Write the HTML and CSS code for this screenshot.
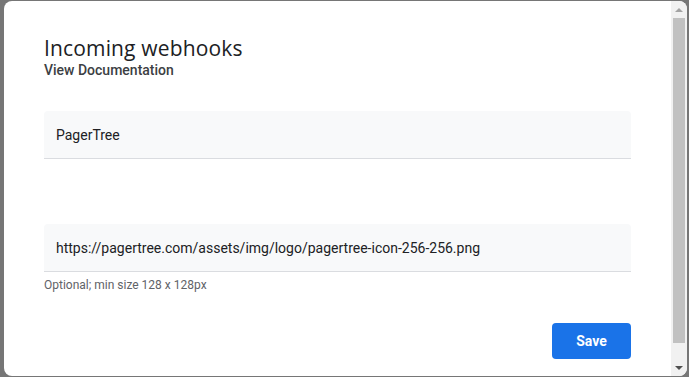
FILE: index.html
```html
<!DOCTYPE html>
<html>
<head>
<meta charset="utf-8">
<link rel="stylesheet" href="styles.css">
</head>
<body>
<div class="dialog">
  <div class="content">
    <h1 class="title">Incoming webhooks</h1>
    <div class="doc">View Documentation</div>
    <div class="field"><span class="value">PagerTree</span></div>
    <div class="field field-url"><span class="value">https://pagertree.com/assets/img/logo/pagertree-icon-256-256.png</span></div>
    <div class="hint">Optional; min size 128 x 128px</div>
    <div class="actions"><button class="save">Save</button></div>
  </div>
  <div class="scrollbar">
    <div class="arrow arrow-up"></div>
    <div class="thumb"></div>
    <div class="arrow arrow-down"></div>
  </div>
</div>
</body>
</html>
```
FILE: styles.css
```css
html, body {
  margin: 0;
  padding: 0;
  height: 100%;
}
body {
  background: #767676;
  padding: 1px 2px 1px 4px;
  box-sizing: border-box;
  font-family: Roboto, "Liberation Sans", sans-serif;
}
.dialog {
  height: 100%;
  background: #fff;
  border-radius: 8px;
  display: flex;
  overflow: hidden;
}
.content {
  flex: 1;
  padding: 33px 40px 0 40px;
  display: flex;
  flex-direction: column;
}
.title {
  margin: 0;
  font-family: "Open Sans", Roboto, sans-serif;
  font-weight: 400;
  font-size: 21px;
  line-height: 28px;
  color: #202124;
  letter-spacing: 0.15px;
}
.doc {
  font-size: 14px;
  font-weight: 500;
  color: #3c4043;
  line-height: 20px;
  margin-top: -2px;
}
.field {
  height: 48px;
  background: #f8f9fa;
  border-radius: 4px 4px 0 0;
  border-bottom: 1px solid #dadce0;
  box-sizing: border-box;
  display: flex;
  align-items: center;
  padding: 0 12px;
  margin-top: 31px;
}
.field-url {
  margin-top: 65px;
}
.value {
  font-size: 14px;
  color: #202124;
}
.hint {
  font-size: 12px;
  color: #5f6368;
  margin-top: 5px;
  line-height: 16px;
}
.actions {
  display: flex;
  justify-content: flex-end;
  margin-top: 30px;
}
.save {
  width: 79px;
  height: 36px;
  border: none;
  border-radius: 4px;
  background: #1a73e8;
  color: #fff;
  font-family: Roboto, sans-serif;
  font-weight: 700;
  font-size: 14px;
}
.scrollbar {
  width: 16px;
  background: #f1f1f1;
  display: flex;
  flex-direction: column;
  align-items: center;
}
.arrow {
  height: 17px;
  width: 16px;
  display: flex;
  align-items: center;
  justify-content: center;
}
.arrow-up::before {
  content: "";
  border-left: 4px solid transparent;
  border-right: 4px solid transparent;
  border-bottom: 4px solid #a3a3a3;
}
.arrow-down::before {
  content: "";
  border-left: 4px solid transparent;
  border-right: 4px solid transparent;
  border-top: 4px solid #505050;
}
.thumb {
  flex: 1;
  width: 12px;
  background: #c1c1c1;
  margin-bottom: 16px;
}
```
